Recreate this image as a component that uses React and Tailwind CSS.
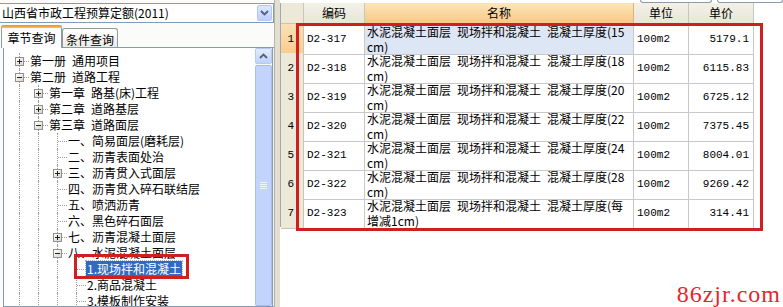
import React from 'react';

const treeRows = [
  { level: 0, exp: '+', text: '第一册\u2002通用项目' },
  { level: 0, exp: '-', text: '第二册\u2002道路工程' },
  { level: 1, exp: '+', text: '第一章\u2002路基(床)工程' },
  { level: 1, exp: '+', text: '第二章\u2002道路基层' },
  { level: 1, exp: '-', text: '第三章\u2002道路面层' },
  { level: 2, exp: null, text: '一、简易面层(磨耗层)' },
  { level: 2, exp: null, text: '二、沥青表面处治' },
  { level: 2, exp: '+', text: '三、沥青贯入式面层' },
  { level: 2, exp: null, text: '四、沥青贯入碎石联结层' },
  { level: 2, exp: null, text: '五、喷洒沥青' },
  { level: 2, exp: null, text: '六、黑色碎石面层' },
  { level: 2, exp: '+', text: '七、沥青混凝土面层' },
  { level: 2, exp: '-', text: '八、水泥混凝土面层' },
  { level: 3, exp: null, text: '1.现场拌和混凝土', selected: true },
  { level: 3, exp: null, text: '2.商品混凝土' },
  { level: 3, exp: null, text: '3.模板制作安装' },
];

const gridRows = [
  { code: 'D2-317', l1: '水泥混凝土面层 现场拌和混凝土 混凝土厚度(15', l2: 'cm)', price: '5179.1' },
  { code: 'D2-318', l1: '水泥混凝土面层 现场拌和混凝土 混凝土厚度(18', l2: 'cm)', price: '6115.83' },
  { code: 'D2-319', l1: '水泥混凝土面层 现场拌和混凝土 混凝土厚度(20', l2: 'cm)', price: '6725.12' },
  { code: 'D2-320', l1: '水泥混凝土面层 现场拌和混凝土 混凝土厚度(22', l2: 'cm)', price: '7375.45' },
  { code: 'D2-321', l1: '水泥混凝土面层 现场拌和混凝土 混凝土厚度(24', l2: 'cm)', price: '8004.01' },
  { code: 'D2-322', l1: '水泥混凝土面层 现场拌和混凝土 混凝土厚度(28', l2: 'cm)', price: '9269.42' },
  { code: 'D2-323', l1: '水泥混凝土面层 现场拌和混凝土 混凝土厚度(每', l2: '增减1cm)', price: '314.41' },
];

const cjk = 'font-["Noto_Sans_CJK_SC",sans-serif]';
const mono = 'font-["Liberation_Mono","Noto_Sans_CJK_SC",monospace]';

function Chevron({ up }) {
  return (
    <svg width="9" height="6" viewBox="0 0 9 6">
      <path d={up ? 'M1 5 L4.5 1.5 L8 5' : 'M1 1 L4.5 4.5 L8 1'} fill="none" stroke="#4d6185" strokeWidth="1.8" />
    </svg>
  );
}

function Expander({ sign }) {
  return (
    <span className="absolute left-[5px] top-[4px] flex h-[9px] w-[9px] items-center justify-center border border-[#919191] bg-gradient-to-br from-white to-[#d8d4c8]">
      <span className="absolute h-px w-[5px] bg-[#222]" />
      {sign === '+' && <span className="absolute h-[5px] w-px bg-[#222]" />}
    </span>
  );
}

function TreeRow({ row }) {
  return (
    <div className="flex h-[16px] items-stretch">
      {Array.from({ length: row.level }).map((_, i) => (
        <div key={i} className="relative w-[19px] shrink-0">
          <span className="absolute left-[9px] top-0 h-full border-l border-dotted border-[#9a9a9a]" />
        </div>
      ))}
      <div className="relative w-[19px] shrink-0">
        <span className="absolute left-[9px] top-0 h-full border-l border-dotted border-[#9a9a9a]" />
        <span className="absolute left-[10px] top-[8px] w-[9px] border-t border-dotted border-[#9a9a9a]" />
        {row.exp && <Expander sign={row.exp} />}
      </div>
      <div
        className={`whitespace-pre px-[1px] text-[12px] leading-[16px] ${
          row.selected ? 'bg-[#316ac5] text-white outline outline-1 outline-dotted outline-[#9bb2dc]' : 'text-black'
        }`}
      >
        {row.text}
      </div>
    </div>
  );
}

export default function App() {
  return (
    <div className={`relative flex h-[307px] w-[783px] overflow-hidden bg-white ${cjk}`}>
      {/* left panel */}
      <div className="flex w-[274px] shrink-0 flex-col bg-[#fbfbf9]">
        <div className="mt-[3px] flex h-[20px] items-center border border-l-0 border-[#7f9db9] bg-white pl-[2px]">
          <span className="flex-1 whitespace-pre text-[12px] leading-[18px] text-black">山西省市政工程预算定额(2011)</span>
          <span className="mr-[1px] flex h-[16px] w-[15px] items-center justify-center rounded-[2px] border border-[#b4c8f6] bg-gradient-to-b from-[#dfe8fd] to-[#bccffa]">
            <Chevron />
          </span>
        </div>
        <div className="mt-[1px] flex h-[23px] items-end pl-[1px]">
          <div className="relative z-10 -mb-px flex h-[23px] w-[61px] items-center justify-center rounded-t-[3px] border border-b-0 border-[#919b9c] bg-[#fcfcfe] text-[12px] leading-none">
            <span className="absolute -left-px -right-px -top-px h-[3px] rounded-t-[3px] bg-gradient-to-b from-[#e68b2c] to-[#ffc73c]" />
            <span className="mt-[1px]">章节查询</span>
          </div>
          <div className="flex h-[19px] w-[56px] items-center justify-center rounded-t-[3px] border border-b-0 border-[#919b9c] bg-gradient-to-b from-white to-[#ecebe5] text-[12px] leading-none">
            <span className="mt-[3px]">条件查询</span>
          </div>
        </div>
        <div className="ml-[3px] flex flex-1 overflow-hidden border border-r-0 border-[#7f9db9] bg-white">
          <div className="flex-1 overflow-hidden pl-[6px] pt-[5px]">
            {treeRows.map((r, i) => (
              <TreeRow key={i} row={r} />
            ))}
          </div>
          <div className="flex w-[17px] shrink-0 flex-col bg-[#f4f4f0]">
            <div className="flex h-[17px] items-center justify-center rounded-[2px] border border-[#b4c8f6] bg-gradient-to-b from-[#e3ebfd] to-[#c0d2fa]">
              <Chevron up />
            </div>
            <div className="mt-[1px] flex h-[260px] flex-col items-center justify-center gap-[1px] rounded-[2px] border border-[#a8bef2] bg-[#c3d4fc]">
              {[0, 1, 2, 3].map((k) => (
                <span key={k} className="h-px w-[7px] bg-[#eef3fe]" />
              ))}
            </div>
          </div>
          <div className="w-[2px] shrink-0 border-l border-[#8e9bb0] bg-[#f0f0f0]" />
        </div>
      </div>

      {/* splitter */}
      <div className="w-[6px] shrink-0 border-l border-[#b8b4a6] bg-[#e2dfd2]" />

      {/* right panel */}
      <div className="flex flex-1 flex-col bg-white">
        <div className="flex h-[3px] shrink-0">
          <div className="ml-[360px] w-[72px] rounded-b-[4px] border border-t-0 border-[#8a9bb0]" />
          <div className="ml-[5px] flex-1 rounded-b-[4px] border border-t-0 border-[#8a9bb0]" />
        </div>
        <div className="w-[473px] border-l border-[#a7a6aa]">
          {/* header */}
          <div className="grid h-[21px] grid-cols-[23px_61px_269px_55px_65px] text-[12px] leading-none">
            <div className="border-b border-r border-[#c9c6b8] bg-[#ece9d8]" />
            <div className="flex items-center justify-center border-b border-r border-[#c9c6b8] bg-gradient-to-b from-[#f3f1e8] to-[#e9e6d7]">编码</div>
            <div className="flex items-center justify-center border-b border-r border-[#d9b57a] bg-gradient-to-b from-[#fce5b9] to-[#f6c985]">名称</div>
            <div className="flex items-center justify-center border-b border-r border-[#c9c6b8] bg-gradient-to-b from-[#f3f1e8] to-[#e9e6d7]">单位</div>
            <div className="flex items-center justify-center border-b border-r border-[#c9c6b8] bg-gradient-to-b from-[#f3f1e8] to-[#e9e6d7]">单价</div>
          </div>
          {gridRows.map((r, i) => (
            <div key={r.code} className="grid h-[29px] grid-cols-[23px_61px_269px_55px_65px] text-black">
              <div
                className={`flex items-center justify-end border-b border-r border-[#c9c6b8] pr-[9px] text-[11px] ${mono} ${
                  i === 0 ? 'bg-gradient-to-b from-[#fce1b4] to-[#f8cd8e]' : 'bg-[#ece9d8]'
                }`}
              >
                {i + 1}
              </div>
              <div className={`flex items-center border-b border-r border-[#c8c8c8] pl-[3px] text-[11px] ${mono}`}>{r.code}</div>
              <div
                className={`flex flex-col justify-center border-b border-r border-[#c8c8c8] pl-[2px] text-[12px] leading-[15px] ${
                  i === 0 ? 'bg-[#dde6f4]' : ''
                }`}
              >
                <span className="whitespace-pre">{r.l1.replace(/ /g, '\u2002')}</span>
                <span className="whitespace-pre">{r.l2}</span>
              </div>
              <div className={`flex items-center border-b border-r border-[#c8c8c8] pl-[3px] text-[11px] ${mono}`}>100m2</div>
              <div className={`flex items-center justify-end border-b border-r border-[#c8c8c8] pr-[4px] text-[11px] ${mono}`}>{r.price}</div>
            </div>
          ))}
        </div>
      </div>

      {/* annotations */}
      <div className="pointer-events-none absolute left-[74px] top-[254px] h-[25px] w-[115px] border-[3px] border-[#cf1f1f]" />
      <div className="pointer-events-none absolute left-[296px] top-[23px] h-[208px] w-[467px] border-[3px] border-[#cf1f1f]" />
      <div className='pointer-events-none absolute bottom-[1px] right-[2px] font-["Liberation_Serif",serif] text-[24px] leading-none tracking-[1px] text-[#e4262c]'>
        86zjr.com
      </div>
    </div>
  );
}
